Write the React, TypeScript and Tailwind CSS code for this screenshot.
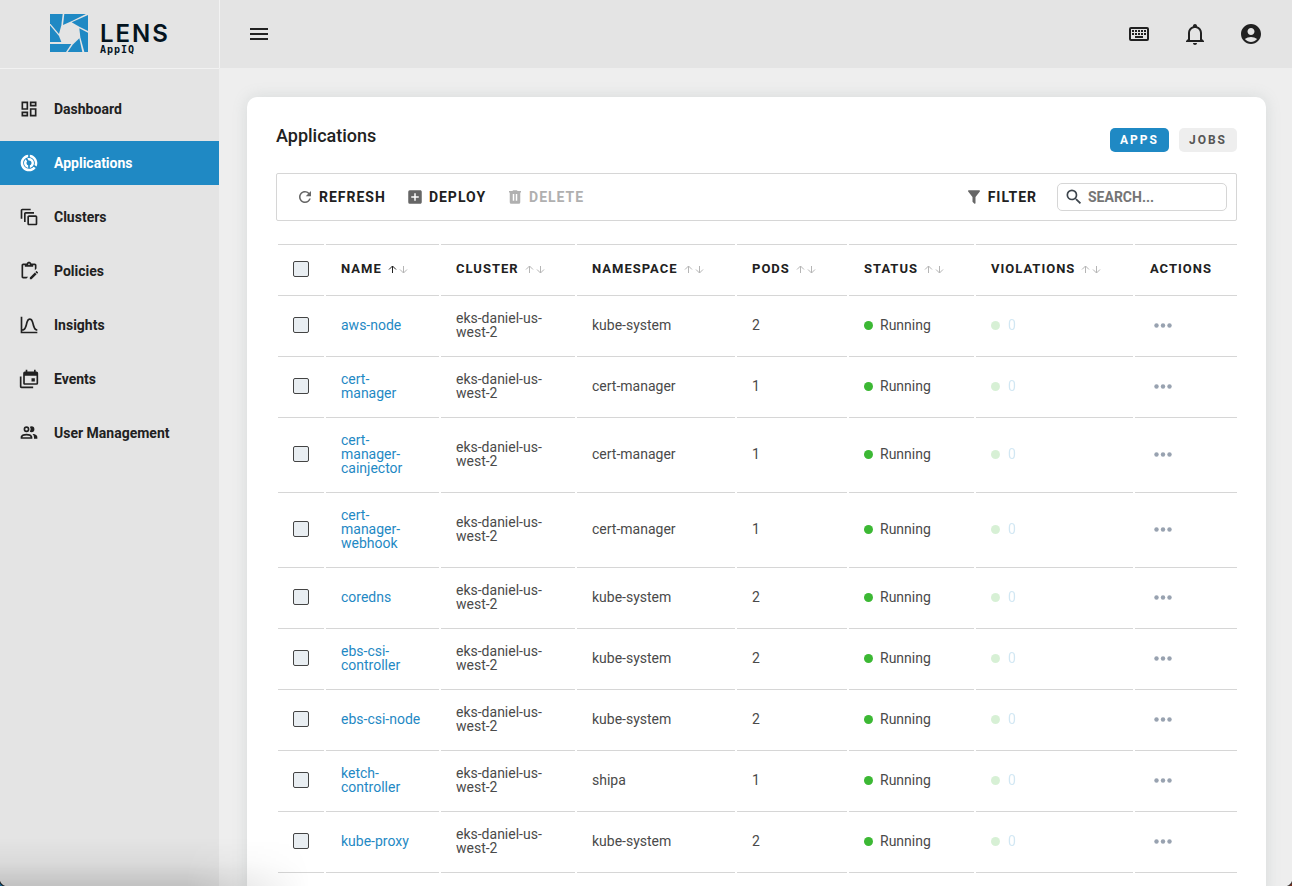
import { MdAccountCircle, MdAddBox, MdMenu, MdOutlineAutoAwesomeMotion, MdOutlineDashboard, MdRefresh, MdSearch } from 'react-icons/md';

const paths = {
  donut:
    'M13,2.05C18.05,2.55 22,6.82 22,12C22,13.45 21.68,14.83 21.12,16.07L18.5,14.54C18.82,13.75 19,12.9 19,12C19,8.47 16.39,5.57 13,5.08V2.05M12,19C14.21,19 16.17,18 17.45,16.38L20.05,17.91C18.23,20.39 15.3,22 12,22C6.47,22 2,17.5 2,12C2,6.81 5.94,2.55 11,2.05V5.08C7.61,5.57 5,8.47 5,12A7,7 0 0,0 12,19M12,6A6,6 0 0,1 18,12C18,14.97 15.84,17.44 13,17.92V14.83C14.17,14.42 15,13.31 15,12A3,3 0 0,0 12,9L11.45,9.05L9.91,6.38C10.56,6.13 11.26,6 12,6M6,12C6,10.14 6.85,8.5 8.18,7.38L9.72,10.05C9.27,10.57 9,11.26 9,12C9,13.31 9.83,14.42 11,14.83V17.92C8.16,17.44 6,14.97 6,12Z',
  clipboard:
    'M21.04 12.13C21.18 12.13 21.31 12.19 21.42 12.3L22.7 13.58C22.92 13.79 22.92 14.14 22.7 14.35L21.7 15.35L19.65 13.3L20.65 12.3C20.76 12.19 20.9 12.13 21.04 12.13M19.07 13.88L21.12 15.93L15.06 22H13V19.94L19.07 13.88M11 19L9 21H5C3.9 21 3 20.1 3 19V5C3 3.9 3.9 3 5 3H9.18C9.6 1.84 10.7 1 12 1C13.3 1 14.4 1.84 14.82 3H19C20.1 3 21 3.9 21 5V9L19 11V5H17V7H7V5H5V19H11M12 3C11.45 3 11 3.45 11 4C11 4.55 11.45 5 12 5C12.55 5 13 4.55 13 4C13 3.45 12.55 3 12 3Z',
  curve:
    'M9.96,11.31C10.82,8.1 11.5,6 13,6C14.5,6 15.18,8.1 16.04,11.31C17,14.92 18.1,19 22,19V17C19.8,17 19,14.54 17.97,10.8C17.08,7.46 16.15,4 13,4C9.85,4 8.92,7.46 8.03,10.8C7.03,14.54 6.2,17 4,17V2H2V22H22V20H4V19C7.9,19 9,14.92 9.96,11.31Z',
  calendar:
    'M21,17V8H7V17H21M21,3A2,2 0 0,1 23,5V17A2,2 0 0,1 21,19H7C5.89,19 5,18.1 5,17V5A2,2 0 0,1 7,3H8V1H10V3H18V1H20V3H21M3,21H17V23H3C1.89,23 1,22.1 1,21V9H3V21M19,15H15V11H19V15Z',
  people:
    'M13.07 10.41A5 5 0 0 0 13.07 4.59A3.39 3.39 0 0 1 15 4A3.5 3.5 0 0 1 15 11A3.39 3.39 0 0 1 13.07 10.41M5.5 7.5A3.5 3.5 0 1 1 9 11A3.5 3.5 0 0 1 5.5 7.5M7.5 7.5A1.5 1.5 0 1 0 9 6A1.5 1.5 0 0 0 7.5 7.5M16 17V19H2V17S2 13 9 13S16 17 16 17M14 17C13.86 16.22 12.67 15 9 15S4.07 16.31 4 17M15.95 13A5.32 5.32 0 0 1 18 17V19H22V17S22 13.37 15.94 13Z',
  keyboard:
    'M4,5A2,2 0 0,0 2,7V17A2,2 0 0,0 4,19H20A2,2 0 0,0 22,17V7A2,2 0 0,0 20,5H4M4,7H20V17H4V7M5,8V10H7V8H5M8,8V10H10V8H8M11,8V10H13V8H11M14,8V10H16V8H14M17,8V10H19V8H17M5,11V13H7V11H5M8,11V13H10V11H8M11,11V13H13V11H11M14,11V13H16V11H14M17,11V13H19V11H17M8,14V16H16V14H8Z',
  bell:
    'M10 21H14C14 22.1 13.1 23 12 23S10 22.1 10 21M21 19V20H3V19L5 17V11C5 7.9 7.03 5.17 10 4.29C10 4.19 10 4.1 10 4C10 2.9 10.9 2 12 2S14 2.9 14 4C14 4.1 14 4.19 14 4.29C16.97 5.17 19 7.9 19 11V17L21 19M17 11C17 8.24 14.76 6 12 6S7 8.24 7 11V18H17V11Z',
  trash: 'M9,3V4H4V6H5V19A2,2 0 0,0 7,21H17A2,2 0 0,0 19,19V6H20V4H15V3H9M9,8H11V17H9V8M13,8H15V17H13V8Z',
  filter:
    'M14,12V19.88C14.04,20.18 13.94,20.5 13.71,20.71C13.32,21.1 12.69,21.1 12.3,20.71L10.29,18.7C10.06,18.47 9.96,18.16 10,17.87V12H9.97L4.21,4.62C3.87,4.19 3.95,3.56 4.38,3.22C4.57,3.08 4.78,3 5,3V3H19V3C19.22,3 19.43,3.08 19.62,3.22C20.05,3.56 20.13,4.19 19.79,4.62L14.03,12H14Z',
};

const Icon = ({ name, size }: { name: keyof typeof paths; size: number }) => (
  <svg viewBox="0 0 24 24" width={size} height={size} fill="currentColor" className="shrink-0" aria-hidden="true">
    <path d={paths[name]} />
  </svg>
);

const navItems = [
  { label: 'Dashboard', icon: <MdOutlineDashboard size={20} /> },
  { label: 'Applications', icon: <Icon name="donut" size={20} />, active: true },
  { label: 'Clusters', icon: <MdOutlineAutoAwesomeMotion size={20} /> },
  { label: 'Policies', icon: <Icon name="clipboard" size={20} /> },
  { label: 'Insights', icon: <Icon name="curve" size={20} /> },
  { label: 'Events', icon: <Icon name="calendar" size={20} /> },
  { label: 'User Management', icon: <Icon name="people" size={20} /> },
];

const columns = ['Name', 'Cluster', 'Namespace', 'Pods', 'Status', 'Violations'];

const apps = [
  { name: 'aws-node', namespace: 'kube-system', pods: 2 },
  { name: 'cert-manager', namespace: 'cert-manager', pods: 1 },
  { name: 'cert-manager-cainjector', namespace: 'cert-manager', pods: 1 },
  { name: 'cert-manager-webhook', namespace: 'cert-manager', pods: 1 },
  { name: 'coredns', namespace: 'kube-system', pods: 2 },
  { name: 'ebs-csi-controller', namespace: 'kube-system', pods: 2 },
  { name: 'ebs-csi-node', namespace: 'kube-system', pods: 2 },
  { name: 'ketch-controller', namespace: 'shipa', pods: 1 },
  { name: 'kube-proxy', namespace: 'kube-system', pods: 2 },
];

const Logo = () => (
  <a href="#" className="flex gap-3 pl-[50px] pt-[14px] w-[220px] shrink-0 border-r border-[#f2f2f2] text-[#04141f]">
    <svg viewBox="0 0 114 114" className="w-[38px] h-[38px]" fill="#1f89c4" aria-hidden="true">
      <path d="M0 0H38L34 34L27 60L0 28Z" />
      <path d="M43 0H108L66 21L39 33Z" />
      <path d="M114 3V51L88 38L65 25Z" />
      <path d="M114 56V114H103L91 70L88 43Z" />
      <path d="M97 114H53L68 92L88 73Z" />
      <path d="M0 90H64L48 114H0Z" />
      <path d="M0 34L27 66L34 84H0Z" />
    </svg>
    <span className="flex flex-col pt-2">
      <span className="font-['Inter'] text-2xl leading-6 font-semibold tracking-[2px]">LENS</span>
      <span className="font-['DejaVu_Sans_Mono'] text-[10px] leading-2 font-bold tracking-widest">AppIQ</span>
    </span>
  </a>
);

const Header = () => (
  <header className="flex h-[68px] bg-[#e4e4e4]">
    <Logo />
    <div className="flex flex-1 items-center justify-between pl-[27px] pr-[29px]">
      <button type="button" aria-label="Menu">
        <MdMenu size={24} />
      </button>
      <div className="flex items-center gap-8">
        <button type="button" aria-label="Shortcuts">
          <Icon name="keyboard" size={24} />
        </button>
        <button type="button" aria-label="Notifications">
          <Icon name="bell" size={24} />
        </button>
        <button type="button" aria-label="Account">
          <MdAccountCircle size={24} />
        </button>
      </div>
    </div>
  </header>
);

const Sidebar = () => (
  <nav className="flex flex-col gap-[10px] w-[219px] shrink-0 bg-[#e4e4e4] border-t border-[#f2f2f2] pt-[18px]">
    {navItems.map((item) => (
      <a
        key={item.label}
        href="#"
        className={`flex items-center gap-[15px] h-11 pl-[19px] text-sm font-bold ${item.active ? 'bg-[#1f89c4] text-white' : ''}`}
      >
        {item.icon}
        {item.label}
      </a>
    ))}
  </nav>
);

const Toolbar = () => (
  <div className="flex items-center justify-between h-12 mt-[21px] pl-[19px] pr-[9px] border border-[#d6d6d6] rounded-xs text-sm font-bold tracking-[1px]">
    <div className="flex items-center gap-5">
      <button type="button" className="flex items-center gap-[5px]">
        <MdRefresh size={18} className="text-[#666]" />
        REFRESH
      </button>
      <button type="button" className="flex items-center gap-[5px]">
        <MdAddBox size={18} className="text-[#666]" />
        DEPLOY
      </button>
      <button type="button" disabled className="flex items-center gap-[5px] text-[#b0b0b0]">
        <Icon name="trash" size={18} />
        DELETE
      </button>
    </div>
    <div className="flex items-center gap-5">
      <button type="button" className="flex items-center gap-[5px]">
        <span className="text-[#666]">
          <Icon name="filter" size={18} />
        </span>
        FILTER
      </button>
      <label className="flex items-center gap-1 w-[170px] h-7 pl-[6px] border border-[#d6d6d6] rounded-[5px]">
        <MdSearch size={20} className="shrink-0 text-[#3d454d]" />
        <input
          type="text"
          aria-label="Search"
          placeholder="SEARCH..."
          className="w-full min-w-0 outline-none font-bold tracking-normal placeholder:text-[#757575]"
        />
      </label>
    </div>
  </div>
);

const SortArrows = ({ ascending }: { ascending: boolean }) => (
  <span className="flex">
    <svg viewBox="0 0 11 11" className={`w-[11px] h-[11px] ${ascending ? 'text-[#212121]' : 'text-[#b5b5b5]'}`} fill="none" stroke="currentColor" aria-hidden="true">
      <path d="M5.5 9V2M2 5.5L5.5 2L9 5.5" />
    </svg>
    <svg viewBox="0 0 11 11" className="w-[11px] h-[11px] text-[#b5b5b5]" fill="none" stroke="currentColor" aria-hidden="true">
      <path d="M5.5 2V9M2 5.5L5.5 9L9 5.5" />
    </svg>
  </span>
);

const Checkbox = ({ label }: { label: string }) => (
  <input
    type="checkbox"
    aria-label={label}
    className="block appearance-none w-4 h-4 border border-[#444] rounded-xs bg-[#e9eef2] checked:bg-[#1f89c4]"
  />
);

const AppsTable = () => (
  <table className="table-fixed w-[calc(100%+2px)] mt-[23px] border-separate border-spacing-x-[2px] border-spacing-y-0 text-sm leading-[14px] text-[#4a4a4a]">
    <colgroup>
      <col className="w-[46px]" />
      <col className="w-[113px]" />
      <col className="w-[134px]" />
      <col className="w-[158px]" />
      <col className="w-[110px]" />
      <col className="w-[125px]" />
      <col className="w-[157px]" />
      <col className="w-[102px]" />
    </colgroup>
    <thead className="text-[13px] text-[#212121] [&_th]:h-[52px] [&_th]:pl-[15px] [&_th]:pb-[2px] [&_th]:border-y [&_th]:border-[#d6d6d6] [&_th]:text-left">
      <tr>
        <th>
          <Checkbox label="Select all" />
        </th>
        {columns.map((column) => (
          <th key={column}>
            <button type="button" className="flex items-center gap-[5px] font-bold uppercase tracking-[1px]">
              {column}
              <SortArrows ascending={column === 'Name'} />
            </button>
          </th>
        ))}
        <th className="font-bold tracking-[1px]">ACTIONS</th>
      </tr>
    </thead>
    <tbody className="[&_td]:px-[15px] [&_td]:pt-[15px] [&_td]:pb-[17px] [&_td]:border-b [&_td]:border-[#d6d6d6]">
      {apps.map((app) => (
        <tr key={app.name}>
          <td>
            <Checkbox label={`Select ${app.name}`} />
          </td>
          <td>
            <a href="#" className="text-[#1f89c4]">
              {app.name}
            </a>
          </td>
          <td>eks-daniel-us-west-2</td>
          <td>{app.namespace}</td>
          <td>{app.pods}</td>
          <td>
            <span className="flex items-center gap-[7px]">
              <span className="w-[9px] h-[9px] rounded-full bg-[#3cb834]" />
              Running
            </span>
          </td>
          <td>
            <a href="#" className="flex items-center gap-2 text-[#1f89c4] opacity-20">
              <span className="w-[9px] h-[9px] rounded-full bg-[#3cb834]" />0
            </a>
          </td>
          <td>
            <button type="button" aria-label={`Actions for ${app.name}`} className="block pl-1">
              <svg viewBox="0 0 18 5" className="w-[18px] h-[5px]" fill="#98a2b0" aria-hidden="true">
                <circle cx="2.5" cy="2.5" r="2.2" />
                <circle cx="9" cy="2.5" r="2.2" />
                <circle cx="15.5" cy="2.5" r="2.2" />
              </svg>
            </button>
          </td>
        </tr>
      ))}
    </tbody>
  </table>
);

const App = () => {
  return (
    <div className="relative flex flex-col h-screen overflow-hidden bg-[#eee] font-['Roboto',sans-serif] text-[#212121]">
      <Header />
      <div className="flex flex-1 min-h-0">
        <Sidebar />
        <main className="flex-1 min-w-0 pt-[29px] pl-7 pr-[26px] overflow-hidden">
          <section className="min-h-full p-[29px] bg-white rounded-[10px] shadow-[0_0_15px_rgba(120,140,140,0.2)]">
            <div className="flex items-end justify-between h-[26px]">
              <h1 className="self-start text-lg leading-5 font-medium">Applications</h1>
              <div className="flex gap-[10px] text-xs font-bold tracking-[2px]">
                <button type="button" className="h-6 px-[10px] rounded-[5px] bg-[#1f89c4] text-white">
                  APPS
                </button>
                <button type="button" className="h-6 px-[10px] rounded-[5px] bg-[#eee] text-[#555]">
                  JOBS
                </button>
              </div>
            </div>
            <Toolbar />
            <AppsTable />
          </section>
        </main>
      </div>
      {/* window shadow and rounded window corners */}
      <div className="absolute bottom-0 left-0 w-[310px] h-12 pointer-events-none bg-[linear-gradient(to_top,rgba(0,0,0,0.15),rgba(0,0,0,0.04)_50%,transparent)] [mask-image:linear-gradient(to_right,black_60%,transparent)]" />
      <div className="absolute bottom-0 left-0 w-2 h-2 bg-[radial-gradient(circle_at_top_right,transparent_8px,#111_9px,#17628f_10px)]" />
      <div className="absolute bottom-0 right-0 w-2 h-2 bg-[radial-gradient(circle_at_top_left,transparent_8px,#333_9px,#7a3020_10px)]" />
    </div>
  );
};

export default App;
